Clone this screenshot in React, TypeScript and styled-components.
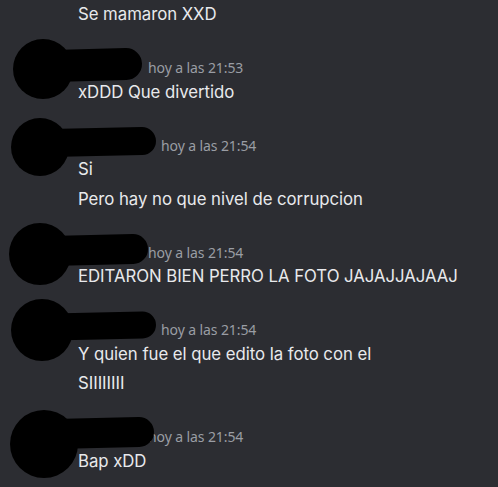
import React from 'react';
import styled, { createGlobalStyle } from 'styled-components';

const GlobalStyle = createGlobalStyle`
  html, body {
    margin: 0;
    padding: 0;
    background: #2c2d32;
  }
  body {
    font-family: Inter, 'Noto Sans', sans-serif;
    -webkit-font-smoothing: antialiased;
  }
`;

const Chat = styled.div`
  width: 498px;
  height: 487px;
  overflow: hidden;
  background: #2c2d32;
  display: flex;
  flex-direction: column;
  gap: 28px;
`;

const Group = styled.div`
  position: relative;
  padding-left: 78px;
`;

const Header = styled.div`
  display: flex;
  align-items: center;
  height: 20px;
`;

const NameSlot = styled.span<{ $w: number }>`
  display: inline-block;
  width: ${(p) => p.$w}px;
  height: 20px;
  margin-right: 6px;
`;

const Stamp = styled.span`
  font-family: 'Noto Sans', sans-serif;
  font-size: 14px;
  color: #9a9da4;
  letter-spacing: -0.1px;
  white-space: nowrap;
`;

const Line = styled.div`
  font-size: 16.8px;
  line-height: 29.5px;
  color: #e8e9ec;
  letter-spacing: -0.05px;
  white-space: nowrap;
`;

// black scribble that hides the avatar + username
const Redaction = styled.svg`
  position: absolute;
  left: 0;
  top: -40px;
  overflow: visible;
  pointer-events: none;
`;

type Blob = { cx: number; cy: number; r: number; ex: number; ey: number; t: number };

const Scribble = ({ cx, cy, r, ex, ey, t }: Blob) => (
  <Redaction width="200" height="100" viewBox="0 -40 200 100">
    <circle cx={cx} cy={cy} r={r} fill="#000" />
    <line
      x1={cx + 10}
      y1={ey + 2}
      x2={ex - t / 2}
      y2={ey}
      stroke="#000"
      strokeWidth={t}
      strokeLinecap="round"
    />
  </Redaction>
);

type Msg = { name: number; time: string; lines: string[]; blob: Blob };

const groups: Msg[] = [
  {
    name: 64,
    time: 'hoy a las 21:53',
    lines: ['xDDD Que divertido'],
    blob: { cx: 43, cy: 11, r: 30, ex: 142, ey: 6, t: 32 },
  },
  {
    name: 77,
    time: 'hoy a las 21:54',
    lines: ['Si', 'Pero hay no que nivel de corrupcion'],
    blob: { cx: 40, cy: 12, r: 29, ex: 156, ey: 6, t: 28 },
  },
  {
    name: 64,
    time: 'hoy a las 21:54',
    lines: ['EDITARON BIEN PERRO LA FOTO JAJAJJAJAAJ'],
    blob: { cx: 40, cy: 12, r: 31, ex: 148, ey: 7, t: 30 },
  },
  {
    name: 77,
    time: 'hoy a las 21:54',
    lines: ['Y quien fue el que edito la foto con el', 'SIIIIIIII'],
    blob: { cx: 42, cy: 10, r: 31, ex: 156, ey: 5, t: 27 },
  },
  {
    name: 64,
    time: 'hoy a las 21:54',
    lines: ['Bap xDD'],
    blob: { cx: 44, cy: 17, r: 34, ex: 154, ey: 5, t: 30 },
  },
];

const App = () => {
  return (
    <>
      <GlobalStyle />
      <Chat>
        <Group>
          <Line>Se mamaron XXD</Line>
        </Group>
        {groups.map((g, i) => (
          <Group key={i}>
            <Header>
              <NameSlot $w={g.name} />
              <Stamp>{g.time}</Stamp>
            </Header>
            {g.lines.map((l, j) => (
              <Line key={j}>{l}</Line>
            ))}
            <Scribble {...g.blob} />
          </Group>
        ))}
      </Chat>
    </>
  );
};

export default App;
